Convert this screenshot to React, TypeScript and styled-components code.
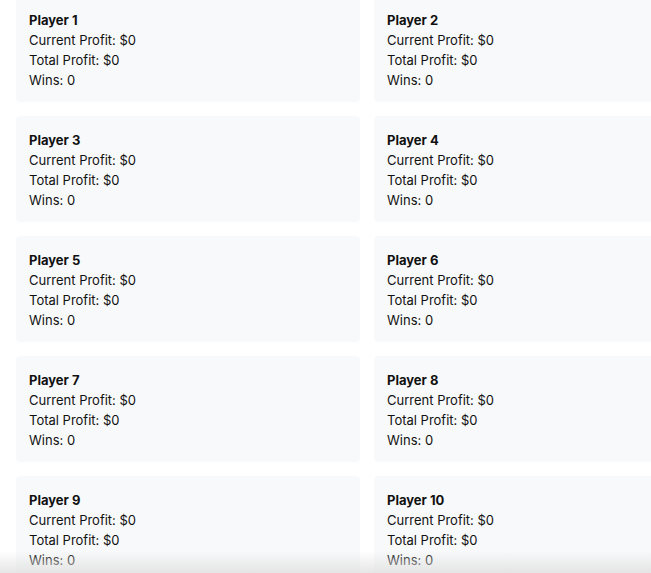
import styled, { createGlobalStyle } from "styled-components";

type Player = {
  name: string;
  currentProfit: number;
  totalProfit: number;
  wins: number;
};

const GlobalStyle = createGlobalStyle`
  html, body {
    margin: 0;
    padding: 0;
    background: #ffffff;
    overflow: hidden;
  }
  body {
    font-family: "Inter", "Liberation Sans", sans-serif;
    color: #111111;
  }
`;

const Page = styled.div`
  width: 651px;
  height: 573px;
  overflow: hidden;
  position: relative;
`;

const Grid = styled.div`
  display: grid;
  grid-template-columns: 344px 344px;
  column-gap: 14px;
  row-gap: 14px;
  padding: 0 0 0 16px;
  margin-top: -4px;
`;

const Card = styled.div`
  background: #f8f9fa;
  border-radius: 4px;
  padding: 14px 13px 12px;
`;

const Name = styled.div`
  font-size: 13px;
  line-height: 20px;
  font-weight: 700;
`;

const Line = styled.div`
  font-size: 13px;
  line-height: 20px;
`;

const Fade = styled.div`
  position: absolute;
  left: 0;
  right: 0;
  bottom: 0;
  height: 22px;
  background: linear-gradient(
    to bottom,
    rgba(225, 225, 225, 0),
    rgba(225, 225, 225, 0.85)
  );
  pointer-events: none;
`;

const players: Player[] = Array.from({ length: 10 }, (_, i) => ({
  name: `Player ${i + 1}`,
  currentProfit: 0,
  totalProfit: 0,
  wins: 0,
}));

export default function App() {
  return (
    <>
      <GlobalStyle />
      <Page>
        <Grid>
          {players.map((p) => (
            <Card key={p.name}>
              <Name>{p.name}</Name>
              <Line>Current Profit: ${p.currentProfit}</Line>
              <Line>Total Profit: ${p.totalProfit}</Line>
              <Line>Wins: {p.wins}</Line>
            </Card>
          ))}
        </Grid>
        <Fade />
      </Page>
    </>
  );
}
